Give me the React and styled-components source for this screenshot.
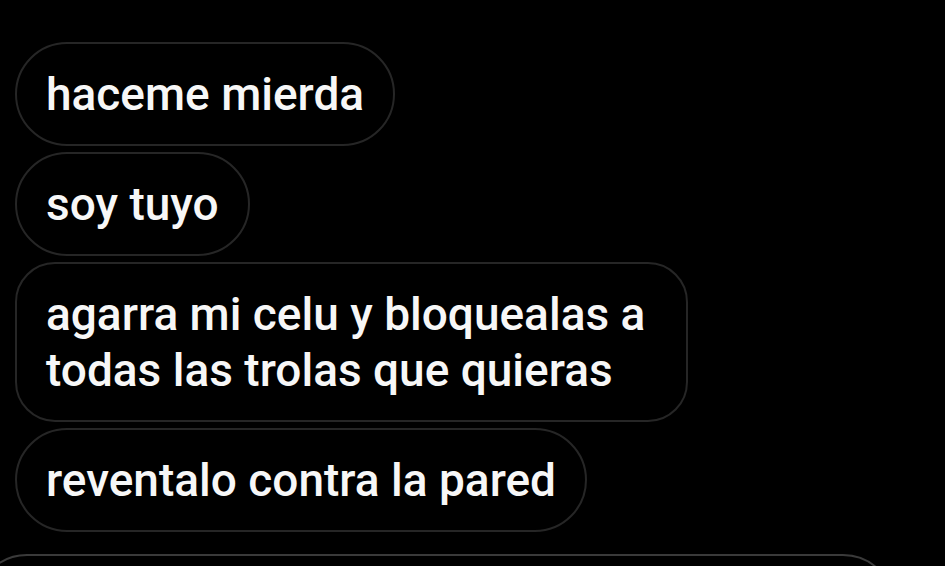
import React from 'react'
import styled, { createGlobalStyle } from 'styled-components'

const Global = createGlobalStyle`
  html, body {
    margin: 0;
    padding: 0;
    background: #000;
    overflow: hidden;
  }
`

const Thread = styled.div`
  width: 945px;
  height: 566px;
  background: #000;
  display: flex;
  flex-direction: column;
  align-items: flex-start;
  gap: 6px;
  padding: 42px 0 0 15px;
  box-sizing: border-box;
  overflow: hidden;
  font-family: Roboto, "Noto Sans", sans-serif;
`

const Bubble = styled.div`
  box-sizing: border-box;
  border: 2px solid #262626;
  border-radius: ${p => (p.multi ? '40px' : '52px')};
  padding: 22px 29px 22px 29px;
  color: #f7f7f7;
  font-size: 46px;
  line-height: 56px;
  font-weight: 500;
  max-width: 673px;
  flex-shrink: 0;
`

const Partial = styled.div`
  flex-shrink: 0;
  margin: 16px 0 0 -40px;
  width: 920px;
  height: 120px;
  border: 2px solid #3a3a3a;
  border-radius: 52px;
  box-sizing: border-box;
`

const messages = [
  'haceme mierda',
  'soy tuyo',
  'agarra mi celu y bloquealas a todas las trolas que quieras',
  'reventalo contra la pared',
]

export default function App() {
  return (
    <>
      <Global />
      <Thread>
        {messages.map((m, i) => (
          <Bubble key={i} multi={i === 2}>{m}</Bubble>
        ))}
        <Partial />
      </Thread>
    </>
  )
}
